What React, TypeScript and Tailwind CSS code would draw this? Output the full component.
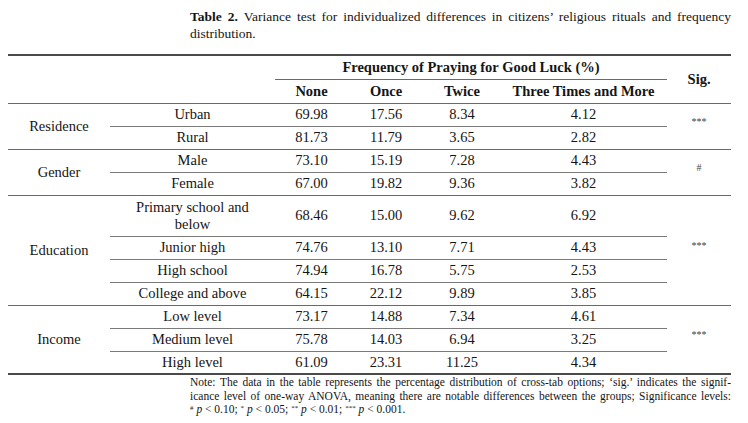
import React from "react";

type Row = { label: React.ReactNode; v: string[]; tall?: boolean };
type Group = { cat: string; sig: string; rows: Row[] };

const groups: Group[] = [
  {
    cat: "Residence",
    sig: "***",
    rows: [
      { label: "Urban", v: ["69.98", "17.56", "8.34", "4.12"] },
      { label: "Rural", v: ["81.73", "11.79", "3.65", "2.82"] },
    ],
  },
  {
    cat: "Gender",
    sig: "#",
    rows: [
      { label: "Male", v: ["73.10", "15.19", "7.28", "4.43"] },
      { label: "Female", v: ["67.00", "19.82", "9.36", "3.82"] },
    ],
  },
  {
    cat: "Education",
    sig: "***",
    rows: [
      {
        label: (
          <>
            Primary school and
            <br />
            below
          </>
        ),
        v: ["68.46", "15.00", "9.62", "6.92"],
        tall: true,
      },
      { label: "Junior high", v: ["74.76", "13.10", "7.71", "4.43"] },
      { label: "High school", v: ["74.94", "16.78", "5.75", "2.53"] },
      { label: "College and above", v: ["64.15", "22.12", "9.89", "3.85"] },
    ],
  },
  {
    cat: "Income",
    sig: "***",
    rows: [
      { label: "Low level", v: ["73.17", "14.88", "7.34", "4.61"] },
      { label: "Medium level", v: ["75.78", "14.03", "6.94", "3.25"] },
      { label: "High level", v: ["61.09", "23.31", "11.25", "4.34"] },
    ],
  },
];

const SERIF = "font-['Liberation_Serif','Times_New_Roman',serif]";

export default function App() {
  return (
    <div
      className={
        "w-[748px] h-[423px] bg-white text-[#151515] overflow-hidden " + SERIF
      }
    >
      <div className="pl-[190px] pr-[17px] pt-[8px] text-[13.5px] leading-[17px]">
        <div className="text-justify [text-align-last:justify]">
          <span className="font-bold">Table 2.</span>
          <span className="inline-block w-[6px]" />
          Variance test for individualized differences in citizens’ religious rituals and frequency
        </div>
        <div>distribution.</div>
      </div>

      <div className="pl-[8px] mt-[12px]">
        <table
          className={
            "table-fixed border-collapse w-[723px] text-[14.5px] leading-[17px] text-[#151515] " +
            SERIF
          }
        >
          <colgroup>
            <col className="w-[102px]" />
            <col className="w-[165px]" />
            <col className="w-[73px]" />
            <col className="w-[76px]" />
            <col className="w-[76px]" />
            <col className="w-[167px]" />
            <col className="w-[64px]" />
          </colgroup>
          <thead>
            <tr className="h-[24px] border-t-2 border-[#4a4a4a]">
              <th colSpan={2} rowSpan={2} className="p-0" />
              <th
                colSpan={4}
                className="p-0 font-bold text-center align-middle border-b border-[#6a6a6a]"
              >
                Frequency of Praying for Good Luck (%)
              </th>
              <th rowSpan={2} className="p-0 font-bold text-center align-middle">
                Sig.
              </th>
            </tr>
            <tr className="h-[24px]">
              <th className="p-0 font-bold text-center">None</th>
              <th className="p-0 font-bold text-center">Once</th>
              <th className="p-0 font-bold text-center">Twice</th>
              <th className="p-0 font-bold text-center">Three Times and More</th>
            </tr>
          </thead>
          <tbody>
            {groups.map((g, gi) =>
              g.rows.map((r, ri) => {
                const last = ri === g.rows.length - 1;
                const lastGroup = gi === groups.length - 1;
                const cellBorder = last
                  ? lastGroup
                    ? "border-b-2 border-[#4a4a4a]"
                    : "border-b border-[#6a6a6a]"
                  : "border-b border-[#7a7a7a]";
                return (
                  <tr
                    key={`${gi}-${ri}`}
                    className={
                      (r.tall ? "h-[41px] " : "h-[23px] ") +
                      (ri === 0 ? "border-t border-[#6a6a6a]" : "")
                    }
                  >
                    {ri === 0 && (
                      <td
                        rowSpan={g.rows.length}
                        className={
                          "p-0 text-center align-middle " +
                          (lastGroup
                            ? "border-b-2 border-[#4a4a4a]"
                            : "border-b border-[#6a6a6a]")
                        }
                      >
                        {g.cat}
                      </td>
                    )}
                    <td className={"p-0 text-center align-middle " + cellBorder}>
                      {r.label}
                    </td>
                    {r.v.map((x, xi) => (
                      <td
                        key={xi}
                        className={"p-0 text-center align-middle " + cellBorder}
                      >
                        {x}
                      </td>
                    ))}
                    {ri === 0 && (
                      <td
                        rowSpan={g.rows.length}
                        className={
                          "p-0 text-center align-middle " +
                          (lastGroup
                            ? "border-b-2 border-[#4a4a4a]"
                            : "border-b border-[#6a6a6a]")
                        }
                      >
                        <span className="relative -top-[5px] text-[10px] text-[#444]">
                          {g.sig}
                        </span>
                      </td>
                    )}
                  </tr>
                );
              })
            )}
          </tbody>
        </table>
      </div>

      <div className="pl-[190px] pr-[17px] mt-[1px] text-[11.5px] leading-[13.5px]">
        <div className="text-justify [text-align-last:justify]">
          Note: The data in the table represents the percentage distribution of cross-tab options; ‘sig.’ indicates the signif-
        </div>
        <div className="text-justify [text-align-last:justify]">
          icance level of one-way ANOVA, meaning there are notable differences between the groups; Significance levels:
        </div>
        <div>
          <sup className="text-[7px]">#</sup> <i>p</i> &lt; 0.10; <sup className="text-[7px]">*</sup>{" "}
          <i>p</i> &lt; 0.05; <sup className="text-[7px]">**</sup> <i>p</i> &lt; 0.01;{" "}
          <sup className="text-[7px]">***</sup> <i>p</i> &lt; 0.001.
        </div>
      </div>
    </div>
  );
}
